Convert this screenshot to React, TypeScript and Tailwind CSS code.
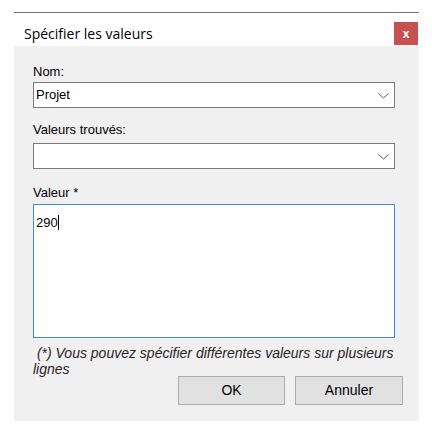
function Combo({ value }: { value?: string }) {
  return (
    <div className="flex h-[26px] w-[362px] items-center justify-between border border-[#7a7a7a] bg-white pl-[2px] pr-[5px]">
      <span className="text-[13px] leading-4 text-black">{value}</span>
      {/* dropdown chevron */}
      <svg width="11" height="6" viewBox="0 0 11 6" className="mt-px">
        <polyline points="0.5,0.5 5.5,5 10.5,0.5" fill="none" stroke="#5a5a5a" strokeWidth="1" />
      </svg>
    </div>
  );
}

export default function App() {
  return (
    <div className="min-h-[435px] bg-white pl-[14px] pt-[12px]" style={{ fontFamily: '"Liberation Sans", Arial, sans-serif' }}>
      <div className="w-[405px] border-t border-[#707070]">
        {/* Title bar */}
        <div className="flex h-[33px] items-center justify-between bg-white pl-[10px] pr-[1px] pt-[8px]">
          <span className="text-[14px] text-black" style={{ fontFamily: '"Open Sans", "Noto Sans", sans-serif' }}>
            Spécifier les valeurs
          </span>
          <button className="flex h-[23px] w-[24px] items-center justify-center bg-[#c75050] text-[12px] font-bold leading-none text-white">
            x
          </button>
        </div>

        {/* Body */}
        <div className="bg-[#f0f0f0] pb-[16px] pl-[19px] pr-[24px] pt-[18px]">
          <div className="mb-[2px] h-4 text-[13px] leading-4 text-black">Nom:</div>
          <Combo value="Projet" />

          <div className="mb-[5px] mt-[14px] h-4 text-[13px] leading-4 text-black">Valeurs trouvés:</div>
          <Combo />

          <div className="mb-[3px] mt-[16px] h-4 text-[13px] leading-4 text-black">Valeur *</div>
          <div className="h-[134px] w-[362px] border border-[#3c8ad8] bg-white pl-[2px] pt-[5px]">
            <span className="text-[13px] leading-4 text-black">290</span>
            <span className="inline-block h-[15px] w-px translate-y-[3px] bg-black" />
          </div>

          <p className="mt-[7px] text-[14px] italic leading-4 text-[#2a2228]">
            &nbsp;(*) Vous pouvez spécifier différentes valeurs sur plusieurs lignes
          </p>

          <div className="-mr-[8px] -mt-px flex justify-end gap-[10px]">
            <button className="h-[29px] w-[107px] border border-[#adadad] bg-[#e1e1e1] text-[14px] text-black">OK</button>
            <button className="h-[29px] w-[108px] border border-[#adadad] bg-[#e1e1e1] text-[14px] text-black">Annuler</button>
          </div>
        </div>
      </div>
    </div>
  );
}
